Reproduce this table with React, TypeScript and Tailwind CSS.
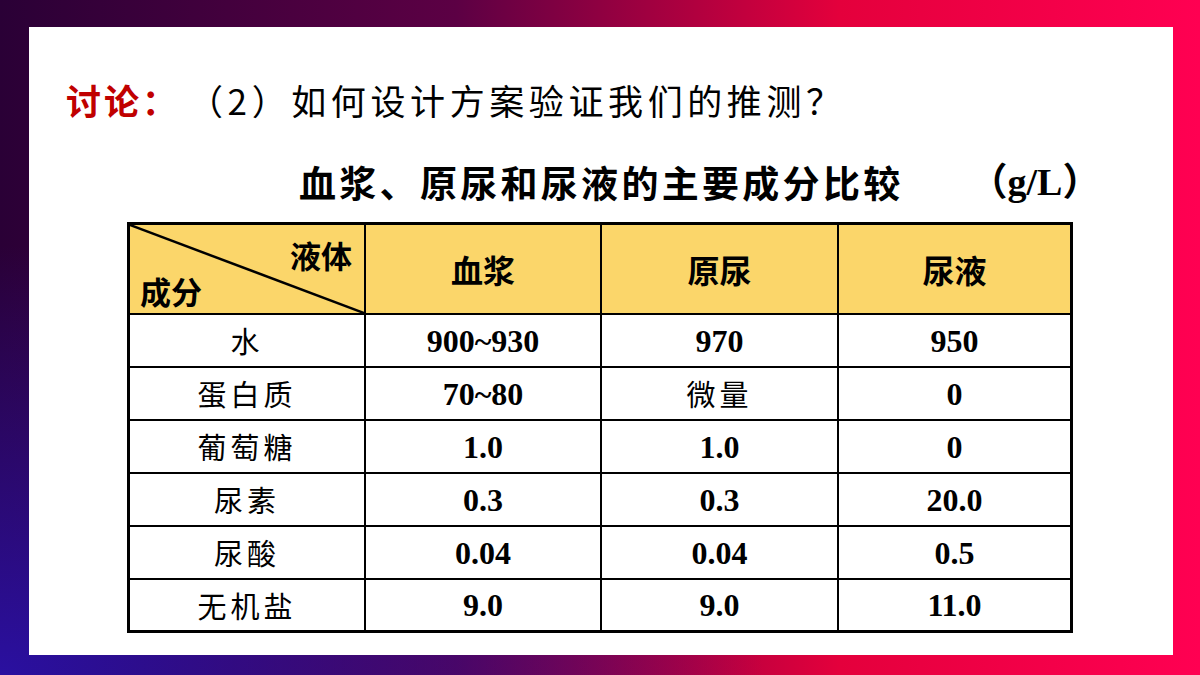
import React from "react";

const rows: [string, string, string, string][] = [
  ["水", "900~930", "970", "950"],
  ["蛋白质", "70~80", "微量", "0"],
  ["葡萄糖", "1.0", "1.0", "0"],
  ["尿素", "0.3", "0.3", "20.0"],
  ["尿酸", "0.04", "0.04", "0.5"],
  ["无机盐", "9.0", "9.0", "11.0"],
];

const isCJK = (s: string) => /[\u4e00-\u9fff]/.test(s);

export default function App() {
  const sans = { fontFamily: '"Noto Sans CJK SC", "Noto Sans", sans-serif' };
  const serif = { fontFamily: '"Liberation Serif", "Noto Sans CJK SC", serif' };
  return (
    <div className="w-[1200px] h-[675px] pt-[27px] pl-[29px] bg-[radial-gradient(ellipse_at_bottom_left,#2a10a0_0%,transparent_45%),linear-gradient(90deg,#2a0036_0%,#5c0044_38%,#e4003c_70%,#ff0052_100%)]">
      <div className="w-[1144px] h-[628px] bg-white flex flex-col">
        <div className="mt-[55px] ml-[37px] flex items-center leading-none" style={sans}>
          <span className="text-[35px] font-bold text-[#c00000] tracking-[3px]">讨论：</span>
          <span className="text-[35px] text-black tracking-[4.6px] ml-[8px]">（2）如何设计方案验证我们的推测？</span>
        </div>
        <div className="mt-[46px] ml-[270px] flex items-center leading-none">
          <span className="text-[37px] font-bold text-black tracking-[3.3px]" style={sans}>
            血浆、原尿和尿液的主要成分比较
          </span>
          <span className="ml-[66px] text-[38px] font-bold text-black" style={serif}>
            （g/L）
          </span>
        </div>
        <div className="mt-[21px] ml-[98px] w-[946px] border-[3px] border-black">
          <div className="grid grid-cols-[236px_236px_237px_231px] h-[90px] bg-[#fbd66a]">
            <div className="relative border-r-2 border-b-2 border-black" style={sans}>
              <svg className="absolute inset-0" width="100%" height="100%" preserveAspectRatio="none" viewBox="0 0 100 100">
                <line x1="0" y1="0" x2="100" y2="100" stroke="black" strokeWidth="2.5" vectorEffect="non-scaling-stroke" />
              </svg>
              <span className="absolute right-[12px] top-[14px] text-[31px] font-bold leading-none">液体</span>
              <span className="absolute left-[10px] bottom-[7px] text-[31px] font-bold leading-none">成分</span>
            </div>
            {["血浆", "原尿", "尿液"].map((h, i) => (
              <div
                key={h}
                className={`flex items-center justify-center border-b-2 border-black text-[32px] font-bold ${i < 2 ? "border-r-2" : ""}`}
                style={sans}
              >
                {h}
              </div>
            ))}
          </div>
          {rows.map((r, ri) => (
            <div
              key={ri}
              className={`grid grid-cols-[236px_236px_237px_231px] ${ri < rows.length - 1 ? "h-[53px] border-b-2 border-black" : "h-[50px]"}`}
            >
              {r.map((c, ci) => (
                <div
                  key={ci}
                  className={`flex items-center justify-center leading-none ${ci < 3 ? "border-r-2 border-black" : ""} ${
                    isCJK(c) ? "text-[29px] tracking-[4px] font-normal" : "text-[32px] font-bold"
                  }`}
                  style={isCJK(c) ? sans : serif}
                >
                  {c}
                </div>
              ))}
            </div>
          ))}
        </div>
      </div>
    </div>
  );
}
